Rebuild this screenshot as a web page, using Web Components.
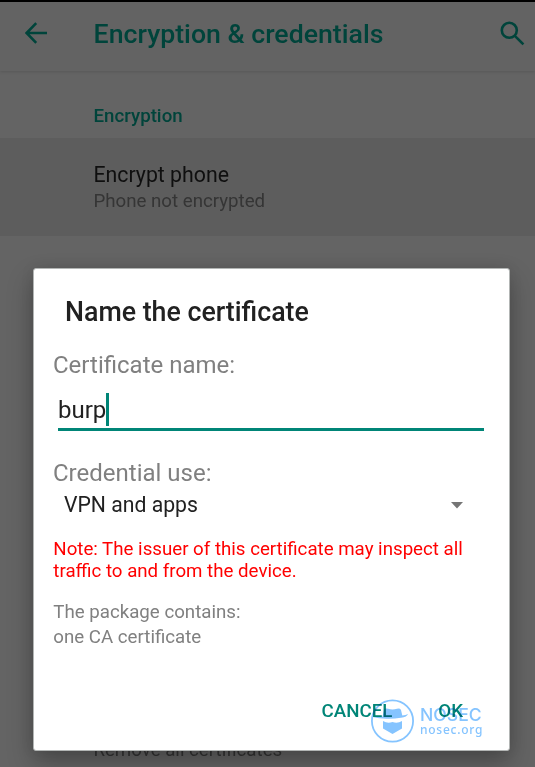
<!DOCTYPE html>
<html lang="en">
<head>
<meta charset="utf-8">
<title>Encryption &amp; credentials</title>
<style>
  body {
    margin: 0;
    font-family: Roboto, "Liberation Sans", sans-serif;
  }
</style>
</head>
<body>

<settings-screen>
  <app-bar>Encryption &amp; credentials</app-bar>
  <settings-category>Encryption</settings-category>
  <settings-item active>
    Encrypt phone
    <span slot="summary">Phone not encrypted</span>
  </settings-item>
  <settings-item class="last">
    <span slot="summary">Remove all certificates</span>
  </settings-item>

  <cert-dialog slot="dialog">
    <span slot="title">Name the certificate</span>
    <text-field label="Certificate name:" value="burp"></text-field>
    <select-field label="Credential use:" value="VPN and apps"></select-field>
    <dialog-note warning>Note: The issuer of this certificate may inspect all traffic to and from the device.</dialog-note>
    <dialog-note>The package contains:<br>one CA certificate</dialog-note>
    <dialog-button slot="actions">CANCEL</dialog-button>
    <dialog-button slot="actions">OK</dialog-button>
  </cert-dialog>
  <nosec-mark slot="dialog"></nosec-mark>
</settings-screen>

<script>
// small helper, every element here is just a template in a shadow root
function define(name, html, setup) {
  const template = document.createElement('template');
  template.innerHTML = html;

  customElements.define(name, class extends HTMLElement {
    constructor() {
      super();
      this.attachShadow({mode: 'open'});
      this.shadowRoot.appendChild(template.content.cloneNode(true));
      if (setup) setup(this, this.shadowRoot);
    }
  });
}

// fill label and value from the attributes
function fillField(el, root) {
  root.querySelector('.label').textContent = el.getAttribute('label');
  root.querySelector('.value').textContent = el.getAttribute('value');
}

define('settings-screen', `
  <style>
    :host {
      background-color: #646464;
      border-top: 2px solid #000;
      box-sizing: border-box;
      display: flex;
      flex-direction: column;
      height: 767px;
      overflow: hidden;
      position: relative;
      width: 535px;
    }

    ::slotted(.last) {
      margin-top: auto;
    }
  </style>
  <slot></slot>
  <slot name="dialog"></slot>
`);

define('app-bar', `
  <style>
    :host {
      align-items: center;
      background-color: #636363;
      box-shadow: 0 1px 3px rgba(0, 0, 0, 0.13);
      box-sizing: border-box;
      color: #00443b;
      display: flex;
      height: 69px;
      padding: 0 10px 5px 25px;
    }

    h1 {
      flex: 1;
      font-size: 26.7px;
      font-weight: 500;
      line-height: 32px;
      margin: 0 0 0 46.6px;
      white-space: nowrap;
    }

    svg {
      display: block;
      fill: none;
      position: relative;
      stroke: currentColor;
      top: -1px;
    }
  </style>
  <svg width="22" height="22" viewBox="0 0 22 22" stroke-width="2.6">
    <path d="M22 11H2M11.2 1.2L1.6 11l9.6 9.8"/>
  </svg>
  <h1><slot></slot></h1>
  <svg width="25" height="25" viewBox="0 0 25 25" stroke-width="2.6">
    <circle cx="9.3" cy="9.3" r="7.5"/>
    <path d="M14.6 14.6l8.8 8.8"/>
  </svg>
`);

define('settings-category', `
  <style>
    :host {
      color: #00443b;
      display: block;
      font-size: 18.7px;
      font-weight: 500;
      line-height: 24px;
      padding: 33px 0 10px 93.5px;
    }
  </style>
  <slot></slot>
`);

define('settings-item', `
  <style>
    :host {
      color: #0f0f0f;
      display: block;
      font-size: 21.3px;
      line-height: 28px;
      padding-left: 93.4px;
    }

    :host([active]) {
      background-color: #5d5d5d;
      height: 75px;
      padding-top: 23px;
    }

    :host(.last) {
      padding-bottom: 4px;
    }

    .summary {
      color: #353535;
      font-size: 18.7px;
      line-height: 25px;
    }
  </style>
  <slot></slot>
  <div class="summary"><slot name="summary"></slot></div>
`);

define('cert-dialog', `
  <style>
    :host {
      background-color: #fff;
      border: 1px solid #b2b5b4;
      border-radius: 3px;
      box-shadow: 0 12px 26px rgba(0, 0, 0, 0.28), 0 0 14px rgba(0, 0, 0, 0.08);
      box-sizing: border-box;
      display: flex;
      flex-direction: column;
      height: 483px;
      left: 33px;
      padding: 27px 25px 27px 19px;
      position: absolute;
      top: 266px;
      width: 477px;
    }

    h2 {
      color: #212121;
      font-size: 26.75px;
      font-weight: 500;
      line-height: 32px;
      margin: 0 0 23px 12px;
    }

    .actions {
      display: flex;
      gap: 46px;
      justify-content: flex-end;
      margin-top: auto;
      padding-right: 21px;
    }
  </style>
  <h2><slot name="title"></slot></h2>
  <slot></slot>
  <div class="actions"><slot name="actions"></slot></div>
`);

define('text-field', `
  <style>
    :host {
      display: block;
      font-size: 24px;
    }

    .label {
      color: #808080;
      line-height: 28px;
    }

    .input {
      align-items: center;
      border-bottom: 3px solid #008577;
      color: #212121;
      display: flex;
      height: 35px;
      margin: 14px 0 0 5px;
    }

    .value {
      line-height: 33px;
    }

    .cursor {
      align-self: flex-start;
      background-color: #008577;
      height: 33px;
      width: 3px;
    }
  </style>
  <div class="label"></div>
  <div class="input"><span class="value"></span><span class="cursor"></span></div>
`, fillField);

define('select-field', `
  <style>
    :host {
      display: block;
      margin-top: 28px;
    }

    .label {
      color: #808080;
      font-size: 24px;
      line-height: 28px;
    }

    .select {
      align-items: center;
      color: #212121;
      display: flex;
      font-size: 21.2px;
      justify-content: space-between;
      line-height: 30px;
      margin: 3px 0 0 11px;
      padding-right: 21px;
    }

    svg {
      fill: #757575;
    }
  </style>
  <div class="label"></div>
  <div class="select">
    <span class="value"></span>
    <svg width="12" height="7" viewBox="0 0 12 7"><path d="M0 0h12L6 6.5z"/></svg>
  </div>
`, fillField);

define('dialog-note', `
  <style>
    :host {
      color: #808080;
      display: block;
      font-size: 18.7px;
      line-height: 25px;
      margin: 18px 0 0 0.3px;
    }

    :host([warning]) {
      color: #f00;
      line-height: 21.5px;
      margin-top: 19px;
    }
  </style>
  <slot></slot>
`);

define('dialog-button', `
  <style>
    :host {
      color: #008577;
      display: block;
      font-size: 18.7px;
      font-weight: 500;
      line-height: 24px;
    }
  </style>
  <slot></slot>
`);

define('nosec-mark', `
  <style>
    :host {
      align-items: center;
      color: #85c4ff;
      display: flex;
      gap: 6px;
      left: 371px;
      mix-blend-mode: multiply;
      position: absolute;
      top: 697px;
    }

    svg {
      display: block;
    }

    .name {
      font: 500 17.6px/17px Inter, sans-serif;
    }

    .site {
      font: 500 12px/13px "Noto Sans", sans-serif;
      letter-spacing: 0.75px;
    }
  </style>
  <svg width="43" height="44" viewBox="0 0 43 44" fill="currentColor">
    <circle cx="21.5" cy="22" r="20.6" fill="none" stroke="currentColor" stroke-width="1.8"/>
    <path d="M13 11q1-2 4-1.200 4.500 1.400 9 0 3-.8 4 1.200l1.300 5.500q3.500-.2 5.700-1.500-1 3-7 3.800-9 1.400-18 .700Q4 19 1 17.500q5 1 10.500.300z"/>
    <path d="M12 22q4.500 3 9.500 1 5 2 9.500-1v7.500l-9.500 5.500-9.500-5.500z"/>
  </svg>
  <div>
    <div class="name">NOSEC</div>
    <div class="site">nosec.org</div>
  </div>
`);
</script>
</body>
</html>
